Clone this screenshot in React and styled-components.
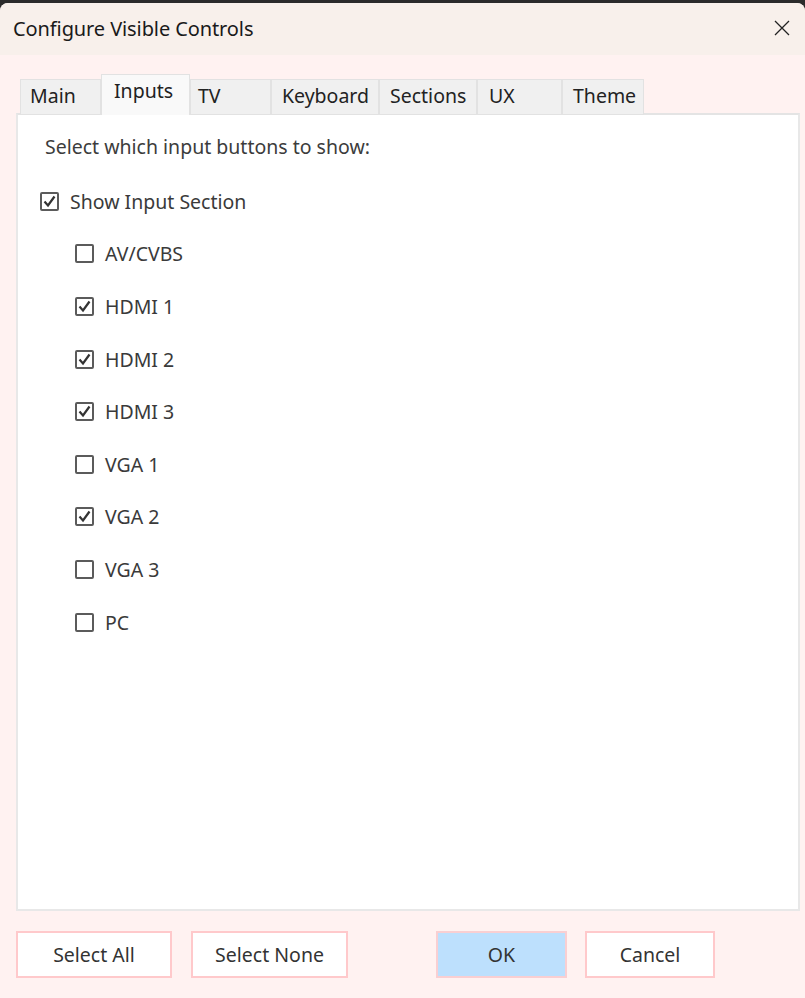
import React from "react";
import styled, { createGlobalStyle } from "styled-components";

const Global = createGlobalStyle`
  html, body { margin: 0; padding: 0; background: #2b2b2b; }
  body { font-family: "Noto Sans", "Open Sans", sans-serif; color: #333; }
  * { box-sizing: border-box; }
`;

const Window = styled.div`
  margin-top: 3px;
  height: 995px;
  width: 805px;
  border-radius: 8px 8px 0 0;
  overflow: hidden;
  display: flex;
  flex-direction: column;
  background: #fff2f1;
`;

const TitleBar = styled.div`
  height: 52px;
  flex: 0 0 52px;
  background: #f8f0eb;
  display: flex;
  align-items: center;
  justify-content: space-between;
  padding: 0 14px 2px 13px;
`;

const Title = styled.div`
  font-size: 20px;
  color: #1a1a1a;
  letter-spacing: -0.1px;
`;

const Close = styled.button`
  border: none;
  background: transparent;
  padding: 0;
  width: 18px;
  height: 18px;
  display: flex;
  align-items: center;
  justify-content: center;
`;

const Body = styled.div`
  flex: 1;
  display: flex;
  flex-direction: column;
  padding: 18px 5px 20px 16px;
`;

const TabStrip = styled.div`
  display: flex;
  align-items: flex-end;
  padding-left: 4px;
  height: 42px;
  position: relative;
  z-index: 1;
  margin-bottom: -2px;
`;

const Tab = styled.div`
  width: ${(p) => p.$w}px;
  height: ${(p) => (p.$active ? 41 : 36)}px;
  background: ${(p) => (p.$active ? "#f9f9f9" : "#f0f0f0")};
  border: 1px solid #e2e2e2;
  border-bottom: ${(p) => (p.$active ? "none" : "1px solid #e2e2e2")};
  padding: ${(p) => (p.$active ? "3px" : "3px")} 0 0 ${(p) => p.$pl}px;
  font-size: 19.5px;
  color: #222;
  line-height: 26px;
  white-space: nowrap;
`;

const Panel = styled.div`
  flex: 1;
  background: #fff;
  border: 2px solid #e8e8e8;
  border-top-color: #e4e4e4;
  padding: 19px 0 0 27px;
  display: flex;
  flex-direction: column;
`;

const Caption = styled.div`
  font-size: 19.5px;
  color: #3c3c3c;
  line-height: 26px;
  margin-bottom: 15px;
`;

const Row = styled.label`
  display: flex;
  align-items: center;
  height: 52.6px;
  padding-left: ${(p) => (p.$indent ? 35 : 0)}px;
  margin-left: -5px;
  font-size: 19.5px;
  color: #3a3a3a;
`;

const Box = styled.span`
  width: 19px;
  height: 19px;
  border: 2px solid #5b5b5b;
  border-radius: 2px;
  background: #fff;
  display: inline-flex;
  align-items: center;
  justify-content: center;
  margin-right: 11px;
  flex: 0 0 19px;
`;

const Buttons = styled.div`
  display: flex;
  margin-top: 20px;
  height: 47px;
`;

const Btn = styled.button`
  width: ${(p) => p.$w}px;
  height: 47px;
  margin-left: ${(p) => p.$ml}px;
  background: ${(p) => (p.$primary ? "#bde0fd" : "#fff")};
  border: 2px solid ${(p) => (p.$primary ? "#f9cfd2" : "#ffc9cb")};
  font-family: "Noto Sans", "Open Sans", sans-serif;
  font-size: 19.5px;
  color: #333;
  padding: 0;
`;

const Check = ({ on }) => (
  <Box>
    {on && (
      <svg width="13" height="13" viewBox="0 0 13 13">
        <path d="M1.5 6.5 L5 10.5 L11.5 1.5" fill="none" stroke="#333" strokeWidth="2.2" />
      </svg>
    )}
  </Box>
);

const tabs = [
  { t: "Main", w: 81, pl: 9 },
  { t: "Inputs", w: 89, pl: 12, active: true },
  { t: "TV", w: 81, pl: 7 },
  { t: "Keyboard", w: 108, pl: 10 },
  { t: "Sections", w: 98, pl: 10 },
  { t: "UX", w: 85, pl: 11 },
  { t: "Theme", w: 82, pl: 10 },
];

const items = [
  ["AV/CVBS", false],
  ["HDMI 1", true],
  ["HDMI 2", true],
  ["HDMI 3", true],
  ["VGA 1", false],
  ["VGA 2", true],
  ["VGA 3", false],
  ["PC", false],
];

export default function App() {
  return (
    <>
      <Global />
      <Window>
        <TitleBar>
          <Title>Configure Visible Controls</Title>
          <Close aria-label="Close">
            <svg width="16" height="16" viewBox="0 0 16 16">
              <path d="M1 1 L15 15 M15 1 L1 15" stroke="#222" strokeWidth="1.3" />
            </svg>
          </Close>
        </TitleBar>
        <Body>
          <TabStrip>
            {tabs.map((t) => (
              <Tab key={t.t} $w={t.w} $pl={t.pl} $active={t.active}>
                {t.t}
              </Tab>
            ))}
          </TabStrip>
          <Panel>
            <Caption>Select which input buttons to show:</Caption>
            <Row>
              <Check on />
              Show Input Section
            </Row>
            {items.map(([l, on]) => (
              <Row key={l} $indent>
                <Check on={on} />
                {l}
              </Row>
            ))}
          </Panel>
          <Buttons>
            <Btn $w={156} $ml={0}>Select All</Btn>
            <Btn $w={157} $ml={19}>Select None</Btn>
            <Btn $w={131} $ml={88} $primary>OK</Btn>
            <Btn $w={130} $ml={18}>Cancel</Btn>
          </Buttons>
        </Body>
      </Window>
    </>
  );
}
